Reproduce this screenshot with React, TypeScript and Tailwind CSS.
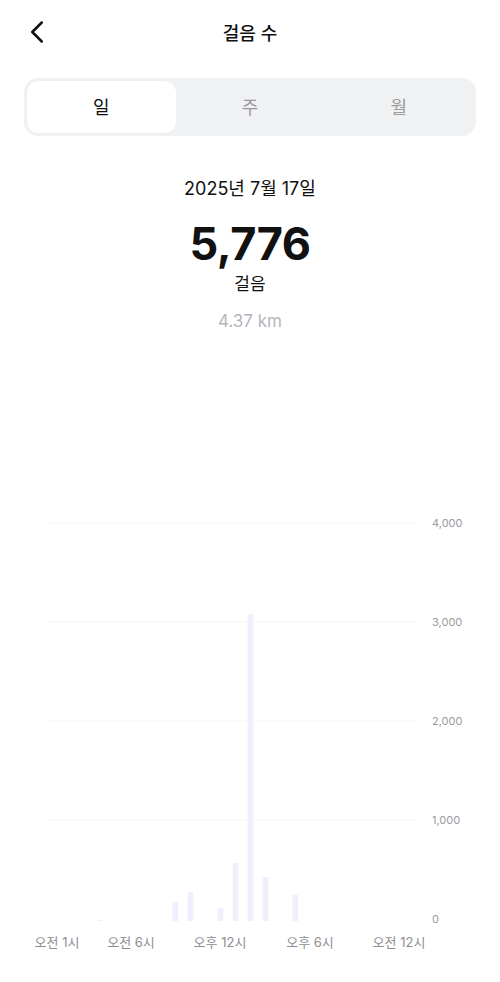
import { ChevronLeft } from 'lucide-react'

const hourly: { h: number; px: number }[] = [
  { h: 2, px: 1 },
  { h: 7, px: 19 },
  { h: 8, px: 29 },
  { h: 10, px: 13 },
  { h: 11, px: 58 },
  { h: 12, px: 307 },
  { h: 13, px: 44 },
  { h: 15, px: 26 },
]

const yTicks = [
  { label: '4,000', y: 23 },
  { label: '3,000', y: 122 },
  { label: '2,000', y: 221 },
  { label: '1,000', y: 320 },
  { label: '0', y: 419 },
]

const xTicks = [
  { label: '오전 1시', x: 57 },
  { label: '오전 6시', x: 131 },
  { label: '오후 12시', x: 220 },
  { label: '오후 6시', x: 310 },
  { label: '오전 12시', x: 399 },
]

function StepsChart() {
  return (
    <svg width="500" height="460" viewBox="0 0 500 460" className="block">
      {yTicks.slice(0, 4).map((t) => (
        <line key={t.label} x1="48" x2="415" y1={t.y} y2={t.y} stroke="#f6f6f8" strokeWidth="1" />
      ))}
      {hourly.map((b) => (
        <rect
          key={b.h}
          x={250.5 + 15 * (b.h - 12) - 2.75}
          y={421 - b.px}
          width="5.5"
          height={b.px}
          fill="#eef0fd"
        />
      ))}
      {yTicks.map((t) => (
        <text
          key={t.label}
          x="432"
          y={t.y + 4}
          fontSize="11"
          fill="#9a9a9f"
          fontFamily="Inter, 'Noto Sans CJK KR', sans-serif"
        >
          {t.label}
        </text>
      ))}
      {xTicks.map((t) => (
        <text
          key={t.label}
          x={t.x}
          y="447"
          fontSize="13"
          textAnchor="middle"
          fill="#8e8e93"
          fontFamily="Inter, 'Noto Sans CJK KR', sans-serif"
        >
          {t.label}
        </text>
      ))}
    </svg>
  )
}

export default function App() {
  return (
    <div className="h-[982px] w-[500px] bg-white font-['Inter','Noto_Sans_CJK_KR',sans-serif] text-[#111]">
      <div className="relative flex h-[66px] items-center justify-center">
        <ChevronLeft className="absolute left-[18px] top-[13px] h-[38px] w-[38px]" strokeWidth={1.6} />
        <span className="text-[18px] font-medium">걸음 수</span>
      </div>

      <div className="mx-[24px] mt-[12px] flex h-[58px] rounded-[14px] bg-[#f0f1f3] p-[3px]">
        <button className="flex-1 rounded-[11px] bg-white text-[18px] text-[#111] shadow-[0_0_1px_rgba(0,0,0,0.08)]">
          일
        </button>
        <button className="flex-1 text-[18px] text-[#9a9a9f]">주</button>
        <button className="flex-1 text-[18px] text-[#9a9a9f]">월</button>
      </div>

      <div className="mt-[40px] flex flex-col items-center">
        <span className="text-[18px] leading-[26px]">2025년 7월 17일</span>
        <span className="mt-[17px] text-[45px] font-bold leading-[50px] tracking-[-0.5px]">5,776</span>
        <span className="mt-[3px] text-[17px] leading-[24px]">걸음</span>
        <span className="mt-[13px] text-[17px] leading-[24px] text-[#b4b6bd]">4.37 km</span>
      </div>

      <div className="mt-[167px]">
        <StepsChart />
      </div>
    </div>
  )
}
